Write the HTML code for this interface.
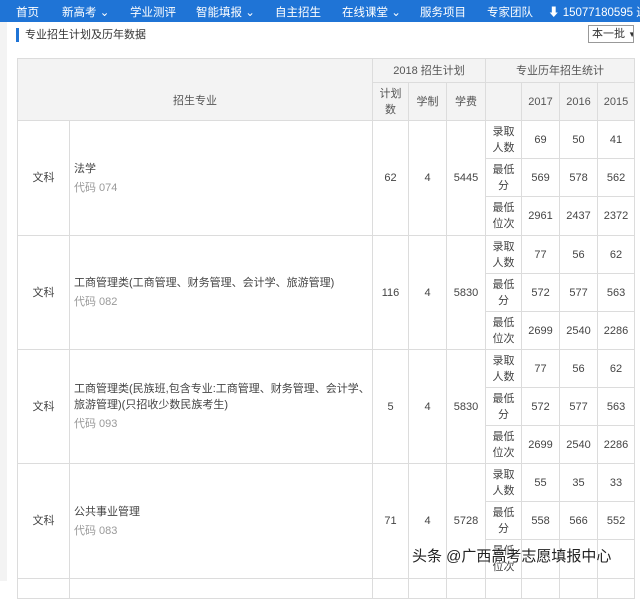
<!DOCTYPE html>
<html><head><meta charset="utf-8"><style>
*{margin:0;padding:0;box-sizing:border-box}
body{width:640px;height:581px;overflow:hidden;background:#fff;font-family:"Liberation Sans","Noto Sans CJK SC",sans-serif;font-size:11px;color:#333;position:relative}
.nav{position:absolute;left:0;top:0;width:640px;height:22px;background:#1f74d6;color:#fff;font-size:11.5px;white-space:nowrap}
.nav span{position:absolute;top:4px}
.side{position:absolute;left:0;top:22px;width:7px;height:559px;background:#f3f3f3}
.title{position:absolute;left:16px;top:28px;font-size:11px;border-left:3px solid #1f74d6;padding-left:6px;height:14px;line-height:14px}
.sel{position:absolute;left:588px;top:25px;width:46px;height:18px;border:1px solid #999;font-size:11px;line-height:16px;padding-left:3px;background:#fff;white-space:nowrap;overflow:hidden}
table{position:absolute;left:17px;top:58px;border-collapse:collapse;table-layout:fixed;width:617px}
td,th{border:1px solid #dcdcdc;text-align:center;font-weight:normal;color:#444;padding:0;line-height:16px}
th{background:#f3f3f3;color:#555}
.l{text-align:left;padding-left:4px}
.c{color:#999;display:block;margin-top:3px}
.wm{position:absolute;left:412px;top:545px;font-size:15px;color:#222;text-shadow:0 0 2px #fff}
</style></head><body>
<div class="nav"><span style="left:16px">首页</span><span style="left:62px">新高考 ⌄</span><span style="left:130px">学业测评</span><span style="left:196px">智能填报 ⌄</span><span style="left:275px">自主招生</span><span style="left:342px">在线课堂 ⌄</span><span style="left:420px">服务项目</span><span style="left:487px">专家团队</span><span style="left:548px">⬇ 15077180595 进</span></div>
<div class="side"></div>
<div class="title">专业招生计划及历年数据</div>
<div class="sel">本一批 <span style="font-size:8px">▼</span></div>
<table>
<colgroup><col style="width:52px"><col style="width:303px"><col style="width:36px"><col style="width:38px"><col style="width:39px"><col style="width:36px"><col style="width:38px"><col style="width:38px"><col style="width:37px"></colgroup>
<tr style="height:24px"><th colspan="2" rowspan="2" style="padding-top:22px">招生专业</th><th colspan="3">2018 招生计划</th><th colspan="4">专业历年招生统计</th></tr>
<tr style="height:38px"><th>计划<br>数</th><th>学制</th><th>学费</th><th></th><th>2017</th><th>2016</th><th>2015</th></tr>

<tr style="height:38px"><td rowspan="3">文科</td><td rowspan="3" class="l">法学<span class="c">代码 074</span></td><td rowspan="3">62</td><td rowspan="3">4</td><td rowspan="3">5445</td><td>录取<br>人数</td><td>69</td><td>50</td><td>41</td></tr>
<tr style="height:38px"><td>最低<br>分</td><td>569</td><td>578</td><td>562</td></tr>
<tr style="height:39px"><td>最低<br>位次</td><td>2961</td><td>2437</td><td>2372</td></tr>

<tr style="height:38px"><td rowspan="3">文科</td><td rowspan="3" class="l">工商管理类(工商管理、财务管理、会计学、旅游管理)<span class="c">代码 082</span></td><td rowspan="3">116</td><td rowspan="3">4</td><td rowspan="3">5830</td><td>录取<br>人数</td><td>77</td><td>56</td><td>62</td></tr>
<tr style="height:38px"><td>最低<br>分</td><td>572</td><td>577</td><td>563</td></tr>
<tr style="height:38px"><td>最低<br>位次</td><td>2699</td><td>2540</td><td>2286</td></tr>

<tr style="height:38px"><td rowspan="3">文科</td><td rowspan="3" class="l">工商管理类(民族班,包含专业:工商管理、财务管理、会计学、旅游管理)(只招收少数民族考生)<span class="c">代码 093</span></td><td rowspan="3">5</td><td rowspan="3">4</td><td rowspan="3">5830</td><td>录取<br>人数</td><td>77</td><td>56</td><td>62</td></tr>
<tr style="height:38px"><td>最低<br>分</td><td>572</td><td>577</td><td>563</td></tr>
<tr style="height:38px"><td>最低<br>位次</td><td>2699</td><td>2540</td><td>2286</td></tr>

<tr style="height:38px"><td rowspan="3">文科</td><td rowspan="3" class="l">公共事业管理<span class="c">代码 083</span></td><td rowspan="3">71</td><td rowspan="3">4</td><td rowspan="3">5728</td><td>录取<br>人数</td><td>55</td><td>35</td><td>33</td></tr>
<tr style="height:38px"><td>最低<br>分</td><td>558</td><td>566</td><td>552</td></tr>
<tr style="height:39px"><td>最低<br>位次</td><td></td><td></td><td></td></tr>
<tr style="height:20px"><td></td><td></td><td></td><td></td><td></td><td></td><td></td><td></td><td></td></tr>
</table>
<div class="wm">头条 @广西高考志愿填报中心</div>
</body></html>
